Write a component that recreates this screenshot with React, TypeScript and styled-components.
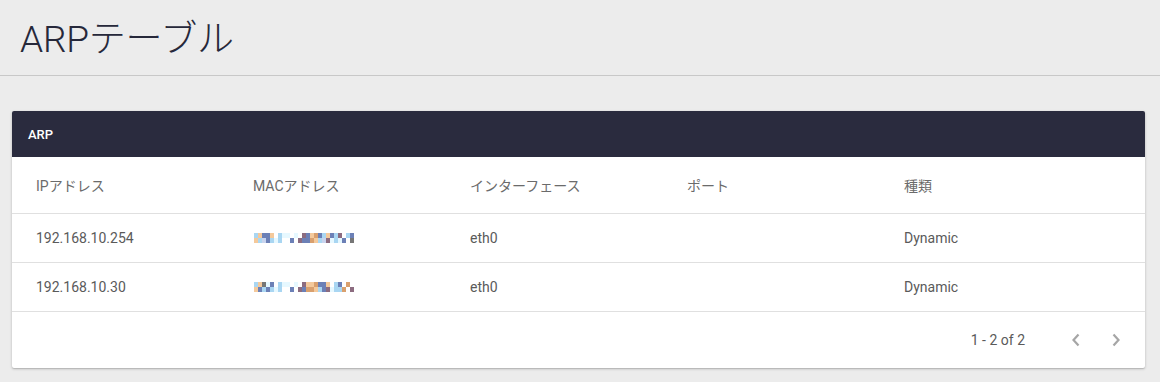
import React from "react";
import styled, { createGlobalStyle } from "styled-components";

const Global = createGlobalStyle`
  html, body { margin: 0; padding: 0; background: #ececec; }
  body { font-family: Roboto, "Noto Sans CJK JP", "Noto Sans", sans-serif; }
  * { box-sizing: border-box; }
`;

const Page = styled.div`
  width: 1160px;
  height: 382px;
  background: #ececec;
  overflow: hidden;
`;

const TitleBar = styled.header`
  height: 76px;
  border-bottom: 1px solid #c8c8c8;
  display: flex;
  align-items: center;
  padding: 0 0 4px 20px;
`;

const Title = styled.h1`
  margin: 0;
  font-size: 37px;
  font-weight: 300;
  color: #26283a;
  letter-spacing: -0.2px;
`;

const Content = styled.main`
  padding: 35px 15px 0 12px;
`;

const Card = styled.section`
  background: #fff;
  border-radius: 2px;
  box-shadow: 0 1px 3px rgba(0, 0, 0, 0.2), 0 1px 1px rgba(0, 0, 0, 0.1);
  overflow: hidden;
`;

const CardHeader = styled.div`
  height: 46px;
  background: #2a2b3e;
  color: #fff;
  font-size: 13px;
  font-weight: 500;
  display: flex;
  align-items: center;
  padding-left: 16px;
`;

const Row = styled.div<{ $head?: boolean }>`
  display: grid;
  grid-template-columns: repeat(5, 217px);
  align-items: center;
  padding: 0 24px;
  height: ${(p) => (p.$head ? "57px" : "49px")};
  border-bottom: 1px solid #e0e0e0;
  font-size: 14px;
  color: ${(p) => (p.$head ? "#6b6b6b" : "#5a5a5a")};
`;

const Cell = styled.div`
  white-space: nowrap;
`;

const Mosaic = styled.div`
  display: grid;
  grid-auto-flow: column;
  grid-template-rows: repeat(2, 5px);
  grid-auto-columns: 4px;
  width: max-content;
  margin-left: 1px;
`;

const Px = styled.span<{ $c: string }>`
  background: ${(p) => p.$c};
`;

const Footer = styled.div`
  height: 56px;
  display: flex;
  align-items: center;
  justify-content: flex-end;
  padding-right: 9px;
  font-size: 14px;
  color: #5a5a5a;
`;

const Range = styled.span`
  margin-right: 31px;
`;

const NavButton = styled.button`
  width: 40px;
  height: 40px;
  border: none;
  background: transparent;
  display: flex;
  align-items: center;
  justify-content: center;
  padding: 0;
  color: #a6a6a6;
`;

const palette: Record<string, string> = {
  b: "#a9d6f2",
  p: "#f4c99b",
  s: "#6c80b6",
  g: "#767676",
  m: "#8c6c80",
  w: "#e6f8ff",
  t: "#d9a06e",
  y: "#fff3d6",
  l: "#c9d4ee",
  _: "transparent",
};

// pairs: top,bottom for each column
const mac1 = "bp pb sl ss pb _w bb w_ w_ _s w_ _m ms ss pt tp sb bl pm sw bb mw _s b_ sg";
const mac2 = "bp ps gb ws sb _w bb w_ w_ _s w_ _m ms pt pt tp sb ss pm _w bb sb _t t_ _m";

const MacMosaic: React.FC<{ code: string }> = ({ code }) => (
  <Mosaic>
    {code
      .split(" ")
      .flatMap((pair) => pair.split(""))
      .map((k, i) => (
        <Px key={i} $c={palette[k]} />
      ))}
  </Mosaic>
);

const Chevron: React.FC<{ dir: "left" | "right" }> = ({ dir }) => (
  <svg width="10" height="14" viewBox="0 0 10 14" fill="none">
    <path
      d={dir === "left" ? "M7.5 1.5 L2.5 7 L7.5 12.5" : "M2.5 1.5 L7.5 7 L2.5 12.5"}
      stroke="currentColor"
      strokeWidth="2.2"
    />
  </svg>
);

const rows = [
  { ip: "192.168.10.254", mac: mac1, iface: "eth0", port: "", kind: "Dynamic" },
  { ip: "192.168.10.30", mac: mac2, iface: "eth0", port: "", kind: "Dynamic" },
];

export default function App() {
  return (
    <Page>
      <Global />
      <TitleBar>
        <Title>ARPテーブル</Title>
      </TitleBar>
      <Content>
        <Card>
          <CardHeader>ARP</CardHeader>
          <Row $head>
            <Cell>IPアドレス</Cell>
            <Cell>MACアドレス</Cell>
            <Cell>インターフェース</Cell>
            <Cell>ポート</Cell>
            <Cell>種類</Cell>
          </Row>
          {rows.map((r) => (
            <Row key={r.ip}>
              <Cell>{r.ip}</Cell>
              <Cell>
                <MacMosaic code={r.mac} />
              </Cell>
              <Cell>{r.iface}</Cell>
              <Cell>{r.port}</Cell>
              <Cell>{r.kind}</Cell>
            </Row>
          ))}
          <Footer>
            <Range>1 - 2 of 2</Range>
            <NavButton aria-label="previous">
              <Chevron dir="left" />
            </NavButton>
            <NavButton aria-label="next">
              <Chevron dir="right" />
            </NavButton>
          </Footer>
        </Card>
      </Content>
    </Page>
  );
}
